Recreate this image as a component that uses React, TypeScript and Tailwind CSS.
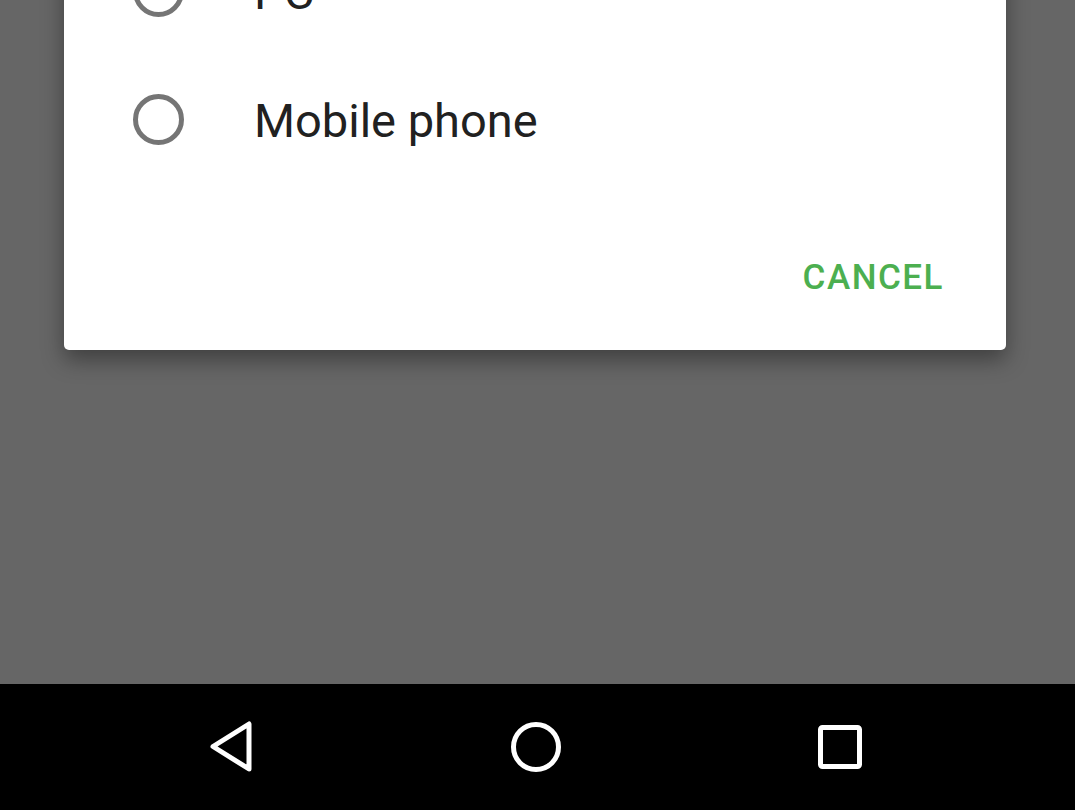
import type { ReactNode } from 'react';

const FONT = { fontFamily: 'Roboto, "Noto Sans", Arial, sans-serif' };

// One row of the single-choice list
function RadioRow({ label }: { label: string }) {
  return (
    <div className="flex h-[128px] items-center pl-[69px]">
      <div className="h-[51px] w-[51px] shrink-0 rounded-full border-[5px] border-[#757575]" />
      <span className="ml-[70px] pt-[3px] text-[47px] leading-[56px] text-[#212121]">{label}</span>
    </div>
  );
}

function NavButton({ children }: { children: ReactNode }) {
  return <div className="flex h-[60px] w-[60px] items-center justify-center">{children}</div>;
}

export default function App() {
  return (
    <div className="flex h-[810px] w-[1075px] flex-col overflow-hidden bg-[#666666]" style={FONT}>
      <div className="flex-1">
        {/* Dialog, top part scrolled off screen */}
        <div className="-mt-[73px] ml-[64px] w-[942px] rounded-b-[5px] bg-white shadow-[0_10px_22px_rgba(0,0,0,0.38)]">
          <RadioRow label="PC" />
          <RadioRow label="Mobile phone" />
          <div className="flex h-[167px] items-start justify-end pr-[62px] pt-[77px]">
            <span className="text-[35px] font-medium leading-[36px] tracking-[1.5px] text-[#4caf50]">CANCEL</span>
          </div>
        </div>
      </div>

      {/* Navigation bar */}
      <div className="flex h-[126px] items-center bg-black pb-[1px]">
        <div className="flex w-full items-center pl-[201px]">
          <NavButton>
            <svg width="48" height="52" viewBox="0 0 48 52" fill="none" stroke="white" strokeWidth="5" strokeLinejoin="round">
              <path d="M42 3 L42 48 L6 25.5 Z" />
            </svg>
          </NavButton>
          <div className="ml-[245px]">
            <NavButton>
              <svg width="54" height="54" viewBox="0 0 54 54" fill="none" stroke="white" strokeWidth="5">
                <circle cx="27" cy="27" r="22.5" />
              </svg>
            </NavButton>
          </div>
          <div className="ml-[244px]">
            <NavButton>
              <svg width="48" height="48" viewBox="0 0 48 48" fill="none" stroke="white" strokeWidth="5">
                <rect x="4.5" y="4.5" width="39" height="39" rx="2" />
              </svg>
            </NavButton>
          </div>
        </div>
      </div>
    </div>
  );
}
